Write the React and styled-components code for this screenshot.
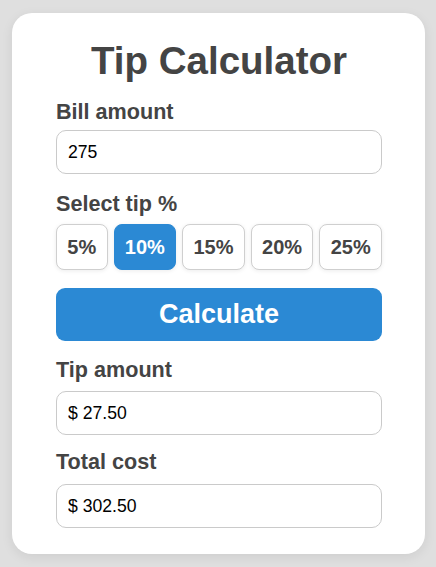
import React, { useState } from 'react';
import styled, { createGlobalStyle } from 'styled-components';

const GlobalStyle = createGlobalStyle`
  * {
    box-sizing: border-box;
  }

  body {
    margin: 0;
    background: #dfdfdf;
    font-family: "Liberation Sans", Arial, sans-serif;
  }
`;

const tips = [5, 10, 15, 20, 25];

const App = () => {
  const [bill, setBill] = useState('275');
  const [tip, setTip] = useState(10);
  const [result, setResult] = useState({ tip: 27.5, total: 302.5 });

  const handleCalculate = () => {
    const amount = parseFloat(bill) || 0;
    const tipAmount = amount * tip / 100;
    setResult({ tip: tipAmount, total: amount + tipAmount });
  };

  return (
    <Page>
      <GlobalStyle />
      <Card>
        <Title>Tip Calculator</Title>

        <Label>Bill amount</Label>
        <Input
          type="text"
          value={bill}
          onChange={(e) => setBill(e.target.value)}
        />

        <Label $top={18}>Select tip %</Label>
        <TipRow>
          {tips.map((t) => (
            <TipButton key={t} $active={t === tip} onClick={() => setTip(t)}>
              {t}%
            </TipButton>
          ))}
        </TipRow>

        <CalcButton onClick={handleCalculate}>Calculate</CalcButton>

        <Label $top={17} $bottom={9}>Tip amount</Label>
        <Input readOnly value={'$ ' + result.tip.toFixed(2)} />

        <Label $top={15} $bottom={10}>Total cost</Label>
        <Input readOnly value={'$ ' + result.total.toFixed(2)} />
      </Card>
    </Page>
  );
};

export default App;

const Page = styled.div`
  padding: 13px 11px 14px 12px;
`;

const Card = styled.div`
  background: #fff;
  border-radius: 20px;
  box-shadow: 0 3px 12px rgba(0, 0, 0, 0.08);
  padding: 26px 43px 26px 44px;
  display: flex;
  flex-direction: column;
`;

const Title = styled.h1`
  margin: 0 0 17px;
  text-align: center;
  font-size: 38.5px;
  line-height: 44px;
  font-weight: 700;
  color: #444;
`;

const Label = styled.label`
  display: block;
  margin: ${(p) => p.$top || 0}px 0 ${(p) => p.$bottom || 6}px;
  font-size: 21.6px;
  line-height: 24px;
  font-weight: 700;
  color: #444;
`;

const Input = styled.input`
  width: 100%;
  height: 44px;
  padding: 0 11px;
  border: 1px solid #cacaca;
  border-radius: 10px;
  font-family: inherit;
  font-size: 17.6px;
  color: #000;
  background: #fff;
  outline: none;
`;

const TipRow = styled.div`
  display: flex;
  gap: 6px;
  margin-top: 2px;
`;

const TipButton = styled.button`
  flex: 1 1 auto;
  height: 46px;
  padding: 0;
  border: 1px solid ${(p) => (p.$active ? '#2b89d4' : '#cfcfcf')};
  border-radius: 8px;
  background: ${(p) => (p.$active ? '#2b89d4' : '#fff')};
  color: ${(p) => (p.$active ? '#fff' : '#444')};
  box-shadow: 0 1px 4px rgba(0, 0, 0, 0.08);
  font-family: inherit;
  font-size: 20px;
  font-weight: 700;
  cursor: pointer;
`;

const CalcButton = styled.button`
  margin-top: 18px;
  height: 53px;
  border: none;
  border-radius: 9px;
  background: #2b89d4;
  color: #fff;
  font-family: inherit;
  font-size: 27px;
  font-weight: 700;
  cursor: pointer;
`;
